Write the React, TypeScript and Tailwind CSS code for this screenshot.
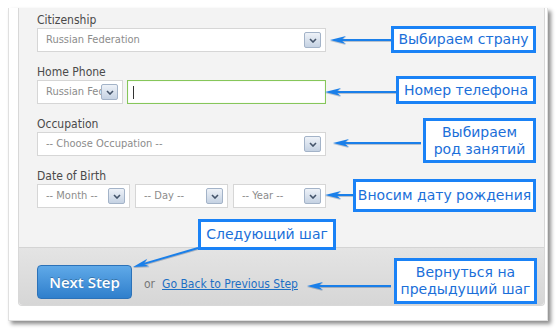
import type { ReactNode } from "react";

const formFont = { fontFamily: '"DejaVu Sans Condensed", "DejaVu Sans", sans-serif' };

const DropButton = () => (
  <span className="flex h-4 w-[17px] shrink-0 items-center justify-center rounded-[2px] border border-[#a3b3c8] bg-gradient-to-b from-[#eef2f8] to-[#c5d2e3]">
    <svg width="8" height="5" viewBox="0 0 8 5">
      <polyline points="1,1 4,4 7,1" fill="none" stroke="#44546a" strokeWidth="1.6" />
    </svg>
  </span>
);

const Select = ({ text, className = "" }: { text: string; className?: string }) => (
  <div
    className={`flex h-6 items-center border border-[#d6d6d6] bg-white pl-2 pr-[4px] text-[11px] text-[#8c8c8c] ${className}`}
  >
    <span className="min-w-0 flex-1 overflow-hidden whitespace-nowrap">{text}</span>
    <DropButton />
  </div>
);

const Field = ({ label, children }: { label: string; children: ReactNode }) => (
  <div className="flex w-[289px] flex-col">
    <div className="h-4 text-[12px] leading-4 text-[#4a4a4a]">{label}</div>
    {children}
  </div>
);

const Callout = ({ className, children }: { className: string; children: ReactNode }) => (
  <div
    className={`absolute flex items-center justify-center border-[3px] border-[#1a82f6] bg-white text-center text-[14px] leading-[17px] text-[#1b6fd9] ${className}`}
    style={{ fontFamily: '"DejaVu Sans", Verdana, sans-serif' }}
  >
    {children}
  </div>
);

// start point, tip point
const arrows: [number, number, number, number][] = [
  [391, 40, 330, 40],
  [396, 92, 325, 92],
  [421, 143, 333, 143],
  [353, 195, 325, 195],
  [198, 248, 133, 267],
  [391, 286, 307, 286],
];

const Arrow = ({ a }: { a: [number, number, number, number] }) => {
  const [x1, y1, x2, y2] = a;
  const len = Math.hypot(x2 - x1, y2 - y1);
  const ux = (x2 - x1) / len;
  const uy = (y2 - y1) / len;
  const px = -uy;
  const py = ux;
  const headLen = 16;
  const half = 4;
  const bx = x2 - ux * headLen;
  const by = y2 - uy * headLen;
  const nx = x2 - ux * (headLen - 5);
  const ny = y2 - uy * (headLen - 5);
  const pts = `${x2},${y2} ${bx + px * half},${by + py * half} ${nx},${ny} ${bx - px * half},${by - py * half}`;
  return (
    <g>
      <line x1={x1} y1={y1 + 1} x2={nx} y2={ny + 1} stroke="rgba(0,40,90,0.25)" strokeWidth="2" />
      <polygon points={pts} transform="translate(0,1)" fill="rgba(0,40,90,0.25)" />
      <line x1={x1} y1={y1} x2={nx} y2={ny} stroke="#1a7fe9" strokeWidth="2" />
      <polygon points={pts} fill="#1a7fe9" />
    </g>
  );
};

export default function App() {
  return (
    <div className="relative h-[333px] w-[560px] overflow-hidden bg-white" style={formFont}>
      <div className="ml-2 mt-2 h-[313px] w-[540px] border border-t-0 border-[#e0e0e0] bg-white pb-[14px] pl-[9px] pr-[2px] shadow-[3px_3px_4px_rgba(0,0,0,0.45)]">
        <div className="relative flex h-full flex-col rounded-b-[4px] border border-t-0 border-[#d8d8d8] bg-[#f3f3f3]">
          <div className="flex flex-1 flex-col gap-3 pl-[18px] pt-1">
            <Field label="Citizenship">
              <Select text="Russian Federation" />
            </Field>
            <Field label="Home Phone">
              <div className="flex gap-1">
                <Select text="Russian Federation" className="w-[86px]" />
                <div className="flex h-6 flex-1 items-center border border-[#86c65a] bg-white shadow-[inset_0_0_1px_rgba(134,198,90,0.6)]">
                  <span className="ml-[5px] h-[13px] w-px bg-[#333]" />
                </div>
              </div>
            </Field>
            <Field label="Occupation">
              <Select text="-- Choose Occupation --" />
            </Field>
            <Field label="Date of Birth">
              <div className="grid grid-cols-3 gap-[5px]">
                <Select text="-- Month --" />
                <Select text="-- Day --" />
                <Select text="-- Year --" />
              </div>
            </Field>
          </div>

          <div className="flex h-[58px] items-start rounded-b-[4px] border-t border-[#d4d4d4] bg-gradient-to-b from-[#e4e4e4] to-[#d6d6d6] pl-[18px] pt-[17px]">
            <button
              className="h-[34px] w-[95px] rounded-[4px] border border-[#2c72b8] bg-gradient-to-b from-[#5fa9e8] to-[#2f7fcc] text-[15px] font-semibold text-white [text-shadow:0_-1px_0_rgba(0,0,0,0.25)]"
              style={{ fontFamily: '"Open Sans", sans-serif' }}
            >
              Next Step
            </button>
            <span className="ml-3 mt-[10px] text-[12px] text-[#777]">or</span>
            <a href="#" className="ml-[7px] mt-[10px] text-[12px] text-[#1d6fc4] underline">
              Go Back to Previous Step
            </a>
          </div>

          <Callout className="left-[372px] top-[18px] h-[27px] w-[145px]">Выбираем страну</Callout>
          <Callout className="left-[377px] top-[68px] h-[28px] w-[140px]">Номер телефона</Callout>
          <Callout className="left-[404px] top-[110px] h-[45px] w-[113px]">
            Выбираем
            <br />
            род занятий
          </Callout>
          <Callout className="left-[334px] top-[171px] h-[33px] w-[183px]">Вносим дату рождения</Callout>
          <Callout className="left-[179px] top-[211px] h-[31px] w-[138px]">Следующий шаг</Callout>
          <Callout className="left-[375px] top-[250px] h-[46px] w-[143px]">
            Вернуться на
            <br />
            предыдущий шаг
          </Callout>
        </div>
      </div>

      <svg className="pointer-events-none absolute inset-0" width="560" height="333">
        {arrows.map((a, i) => (
          <Arrow key={i} a={a} />
        ))}
      </svg>
    </div>
  );
}
